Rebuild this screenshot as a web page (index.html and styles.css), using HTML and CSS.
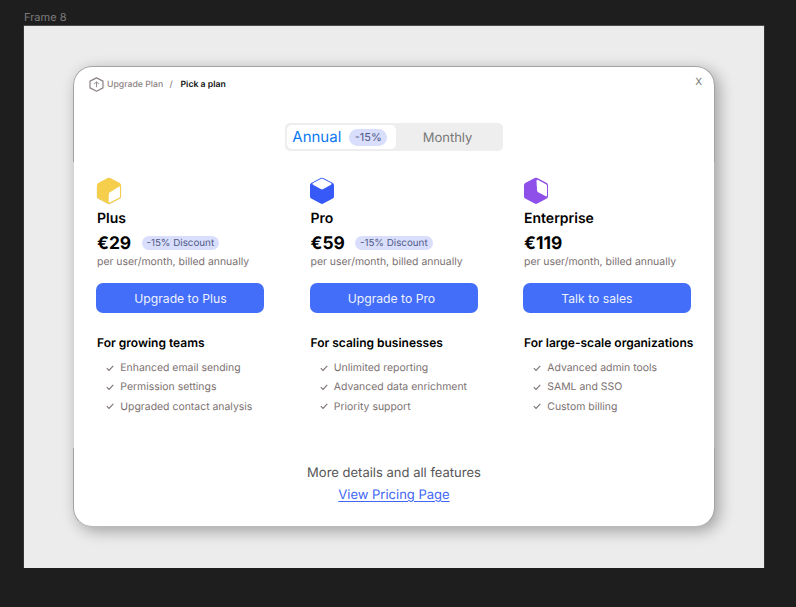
FILE: index.html
```
<!DOCTYPE html>
<html lang="en">
<head>
<meta charset="utf-8">
<title>Pick a plan</title>
<link rel="stylesheet" href="styles.css">
</head>
<body>
<svg class="defs" width="0" height="0"><symbol id="check" viewBox="0 0 8 8"><path d="M.8 4.2 3 6.4 7.3 1.8" fill="none" stroke="currentColor" stroke-width="1.1"/></symbol></svg>
<div class="frame-name">Frame 8</div>
<div class="frame">
  <main class="card">
    <header class="top">
      <svg class="crumb-icon" viewBox="0 0 15 15"><path d="M7.5 .9 14 4.1V10.9L7.5 14.2 1 10.9V4.1Z" fill="none" stroke="currentColor" stroke-width="1.2" stroke-linejoin="round"/><path d="M7.5 10.2V5M5 7.2 7.5 4.8 10 7.2" fill="none" stroke="currentColor" stroke-width=".9"/></svg>
      <span class="crumb">Upgrade Plan</span><span class="slash">/</span><span class="crumb-current">Pick a plan</span>
      <span class="close">X</span>
    </header>
    <div class="toggle">
      <div class="toggle-on"><span>Annual</span><span class="pill">-15%</span></div>
      <div class="toggle-off">Monthly</div>
    </div>
    <section class="plans">
      <article class="plan">
        <svg class="logo" viewBox="0 0 26 28"><path d="M13 1.3 24.2 7.2Q25.2 7.8 25.2 9V20Q25.2 21.2 24.2 21.8L13 27.6 1.8 21.8Q.8 21.2.8 20V9Q.8 7.8 1.8 7.2Z" fill="#ddd3ad"/><path d="M11.7 1Q13 .3 14.3 1L23.8 6Q25 6.7 25 8.2V19.5Q25 20.8 23.8 21.5L14.3 26.6Q13 27.3 11.7 26.6L2.2 21.5Q1 20.8 1 19.5V8.2Q1 6.7 2.2 6Z" fill="#f5cf4b"/><path d="M24 10.5V20.3L13.7 25.4Q12.7 25.8 12.7 24.6V17.7Q12.7 16.2 14 15.2L22.3 10Q24 9 24 10.5Z" fill="#fff"/></svg>
        <h2>Plus</h2>
        <div class="price"><b>€29</b><span class="pill">-15% Discount</span></div>
        <p class="billing">per user/month, billed annually</p>
        <button>Upgrade to Plus</button>
        <h3>For growing teams</h3>
        <ul><li><svg><use href="#check"/></svg>Enhanced email sending</li><li><svg><use href="#check"/></svg>Permission settings</li><li><svg><use href="#check"/></svg>Upgraded contact analysis</li></ul>
      </article>
      <article class="plan">
        <svg class="logo" viewBox="0 0 26 28"><path d="M11.7 1Q13 .3 14.3 1L23.8 6Q25 6.7 25 8.2V19.5Q25 20.8 23.8 21.5L14.3 26.6Q13 27.3 11.7 26.6L2.2 21.5Q1 20.8 1 19.5V8.2Q1 6.7 2.2 6Z" fill="#3659f8"/><path d="M12.3 1.7Q13 1.3 13.7 1.7L22 6.1Q23.2 6.9 22 7.8L14.3 12.1Q13 12.8 11.7 12.1L4 7.8Q2.8 6.9 4 6.1Z" fill="#fff"/></svg>
        <h2>Pro</h2>
        <div class="price"><b>€59</b><span class="pill">-15% Discount</span></div>
        <p class="billing">per user/month, billed annually</p>
        <button class="pro">Upgrade to Pro</button>
        <h3>For scaling businesses</h3>
        <ul><li><svg><use href="#check"/></svg>Unlimited reporting</li><li><svg><use href="#check"/></svg>Advanced data enrichment</li><li><svg><use href="#check"/></svg>Priority support</li></ul>
      </article>
      <article class="plan">
        <svg class="logo" viewBox="0 0 26 28"><path d="M11.7 1Q13 .3 14.3 1L23.8 6Q25 6.7 25 8.2V19.5Q25 20.8 23.8 21.5L14.3 26.6Q13 27.3 11.7 26.6L2.2 21.5Q1 20.8 1 19.5V8.2Q1 6.7 2.2 6Z" fill="#8f50ea"/><path d="M13.5 4Q13.5 2.2 15 3L23 7.2Q24 7.8 24 9V18Q24 20 22.3 19.1L15.2 15.2Q14.2 14.6 14.1 13.4Z" fill="#fff"/></svg>
        <h2>Enterprise</h2>
        <div class="price"><b>€119</b></div>
        <p class="billing">per user/month, billed annually</p>
        <button class="sales">Talk to sales</button>
        <h3>For large-scale organizations</h3>
        <ul><li><svg><use href="#check"/></svg>Advanced admin tools</li><li><svg><use href="#check"/></svg>SAML and SSO</li><li><svg><use href="#check"/></svg>Custom billing</li></ul>
      </article>
    </section>
    <footer><p>More details and all features</p><a>View Pricing Page</a></footer>
  </main>
</div>
</body>
</html>
```

FILE: styles.css
```
* { box-sizing: border-box; }
body { margin: 0; width: 796px; height: 607px; overflow: hidden; background: #1e1e1e; font-family: Inter, sans-serif; color: #000; white-space: nowrap; text-rendering: geometricPrecision; }
h2, h3, p, ul { margin: 0; padding: 0; }
.defs { position: absolute; }
.frame-name { height: 26px; padding: 10px 0 0 24px; font-size: 11px; line-height: 14px; color: #7c7c7c; }
.frame { width: 740px; height: 542px; margin-left: 24px; padding: 41px 50px; background: #ececec; box-shadow: 0 -.5px 0 .5px #4b4b4b; }
.card { position: relative; width: 640px; height: 459px; background: #fff; border-radius: 18px; box-shadow: 4px 4px 15px 1px rgba(0,0,0,.32); }
/* Hairline drawn on the upper and lower parts of the card edge only */
.card::before { content: ""; position: absolute; inset: -1px; border: 1px solid #a3a3a3; border-bottom-color: #bbb; border-radius: 19px; pointer-events: none; -webkit-mask: linear-gradient(#000 96px, transparent 96px 382px, #000 382px); mask: linear-gradient(#000 96px, transparent 96px 382px, #000 382px); }
.top { display: flex; align-items: center; height: 35px; padding: 0 12px 0 15px; font-size: 8.7px; line-height: 12px; font-weight: 500; color: #8c8383; }
.crumb-icon { width: 15px; height: 15px; margin: 0 3px 0 0; }
.crumb { width: 62.5px; }
.slash { width: 11px; }
.crumb-current { color: #111; font-weight: 600; }
.close { margin: -6px 0 0 auto; font-size: 10px; font-weight: 400; color: #777; }
.toggle { display: flex; width: 217.5px; height: 28px; margin: 21px 0 0 211.3px; padding: 2px; border-radius: 5px; background: #eee; }
.toggle-on { display: flex; align-items: center; width: 109px; padding-left: 5px; border-radius: 5px; background: #fff; color: #0c79f2; font-size: 15px; line-height: 22px; }
.toggle-on span:first-child { width: 57px; }
.toggle-off { flex: 1; padding-right: 2px; text-align: center; font-size: 13px; line-height: 26px; color: #777; }
.pill { border-radius: 9px; background: #d9defc; color: #505a86; font-size: 9.8px; }
.toggle .pill { width: 38px; height: 17px; line-height: 17px; font-size: 11px; text-align: center; }
.plans { display: grid; grid-template-columns: repeat(3, 213.5px); margin: 26px 0 0 23px; }
.logo { display: block; width: 26px; height: 28px; margin-left: -1.3px; }
h2 { margin-top: 5px; font-size: 14px; line-height: 18px; font-weight: 600; }
.price { display: flex; align-items: center; height: 22px; margin-top: 5px; }
.price b { width: 44.5px; font-size: 17.4px; line-height: 22px; font-weight: 700; }
.price .pill { width: 77.5px; height: 14px; margin-top: -2px; line-height: 15px; text-align: center; }
.billing { font-size: 10.45px; line-height: 14px; color: #7a7070; }
button { display: block; width: 168px; height: 30px; margin: 14px 0 0 -.6px; padding: 1px 0 0; border: 0; border-radius: 7px; background: #426efa; color: #eef1ff; font: 12.2px/30px Inter, sans-serif; }
.pro { padding-right: 5px; }
.sales { padding-right: 21px; }
h3 { margin-top: 22px; font-size: 12px; line-height: 16px; font-weight: 600; }
ul { margin-top: 7px; list-style: none; }
li { display: flex; align-items: center; height: 19.3px; padding-left: 9px; font-size: 10.45px; color: #7c7272; }
li svg { width: 8px; height: 8px; margin-right: 6.3px; }
footer { margin-top: 46px; text-align: center; font-size: 13px; line-height: 22px; color: #555; }
footer a { color: #4166f5; text-decoration: underline; text-decoration-thickness: 1px; text-underline-offset: 2px; }
```
